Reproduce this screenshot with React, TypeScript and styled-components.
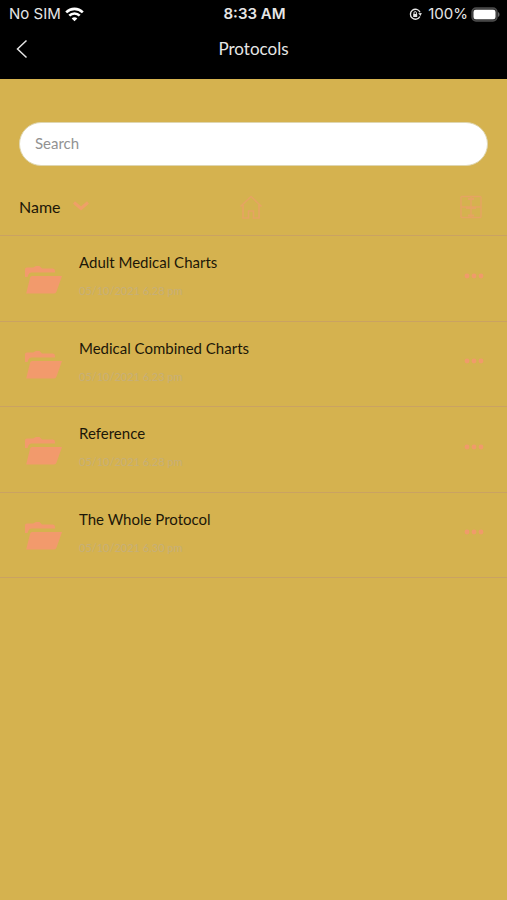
import React from "react";
import styled, { createGlobalStyle } from "styled-components";

const colors = {
  gold: "#d5b24f",
  coral: "#f29a6c",
  faint: "#e6a462",
  line: "#caa262",
  date: "#c6af78",
};

const GlobalStyle = createGlobalStyle`
  * { box-sizing: border-box; }
  body {
    margin: 0;
    background: ${colors.gold};
    font-family: Lato, "Open Sans", sans-serif;
    color: #1c1708;
  }
  button { border: 0; padding: 0; background: none; font: inherit; color: inherit; cursor: pointer; }
  svg { display: block; }
`;

const Header = styled.header`
  background: #000;
  color: #e6e6e6;
  height: 79px;
`;

const StatusBar = styled.div`
  display: grid;
  grid-template-columns: 1fr auto 1fr;
  align-items: center;
  height: 28px;
  padding: 0 7px 0 9px;
  font: 15px/20px Inter, sans-serif;
`;

const StatusGroup = styled.div<{ $end?: boolean }>`
  display: flex;
  align-items: center;
  justify-content: ${(p) => (p.$end ? "flex-end" : "flex-start")};
  gap: ${(p) => (p.$end ? 3 : 4)}px;
`;

const LockIcon = styled.svg`
  margin-right: 3px;
`;

const Clock = styled.time`
  font-weight: 600;
`;

const NavBar = styled.nav`
  display: grid;
  grid-template-columns: 44px 1fr 44px;
  align-items: center;
  height: 42px;
`;

const BackButton = styled.button`
  display: flex;
  align-items: center;
  justify-content: center;
  height: 42px;
`;

const Title = styled.h1`
  margin: 0;
  text-align: center;
  font-size: 17px;
  line-height: 24px;
  font-weight: 400;
`;

const SearchInput = styled.input`
  display: block;
  width: calc(100% - 38px);
  height: 44px;
  margin: 43px 19px 0;
  padding: 0 15px 2px;
  border: 1px solid #dfd6b0;
  border-radius: 22px;
  background: #fff;
  outline: 0;
  font: 15px Lato, sans-serif;
  color: #222;
  &::placeholder { color: #929292; opacity: 1; }
`;

const Toolbar = styled.div`
  display: grid;
  grid-template-columns: 1fr auto 1fr;
  align-items: center;
  height: 70px;
  padding: 12px 24px 0 19px;
  border-bottom: 1px solid ${colors.line};
  & > :last-child { justify-self: end; }
`;

const SortButton = styled.button`
  display: flex;
  align-items: center;
  justify-self: start;
  gap: 12px;
  font-size: 16px;
  line-height: 20px;
`;

const FileList = styled.ul`
  display: grid;
  grid-auto-rows: 1fr;
  min-height: 342px;
  margin: 0;
  padding: 0;
  list-style: none;
`;

const FileRow = styled.li`
  display: grid;
  grid-template-columns: 36px 1fr auto;
  column-gap: 18px;
  align-items: center;
  padding: 0 23px 0 25px;
  border-bottom: 1px solid ${colors.line};
`;

const FolderIcon = styled.svg`
  margin-top: 3px;
`;

const FileText = styled.div`
  display: flex;
  flex-direction: column;
  gap: 11px;
  padding-bottom: 5px;
`;

const FileName = styled.a`
  color: inherit;
  text-decoration: none;
  font-size: 15px;
  line-height: 20px;
`;

const FileDate = styled.time`
  color: ${colors.date};
  font-size: 11px;
  line-height: 16px;
`;

const MoreButton = styled.button`
  padding-bottom: 5px;
`;

const files = [
  { name: "Adult Medical Charts", date: "05/10/2021 6.28 pm" },
  { name: "Medical Combined Charts", date: "05/10/2021 6.23 pm" },
  { name: "Reference", date: "05/10/2021 6.28 pm" },
  { name: "The Whole Protocol", date: "05/10/2021 6.30 pm" },
];

const Wifi = () => (
  <svg width="19" height="15" viewBox="0 0 19 15" fill="none" stroke="#fff" strokeWidth="2.6" aria-hidden="true">
    <path d="M1.2 5.3C5.8.7 13.2.7 17.8 5.3" />
    <path d="M4.3 8.6c2.9-2.900 7.500-2.900 10.400 0" />
    <path d="M9.5 14.2 6.7 11.4c1.6-1.5 4-1.5 5.6 0Z" fill="#fff" stroke="none" />
  </svg>
);

const RotationLock = () => (
  <LockIcon width="13" height="13" viewBox="0 0 13 13" fill="none" stroke="#e6e6e6" aria-hidden="true">
    <path d="M10.9 8.5A5 5 0 1 1 11 4.2" strokeWidth="1.4" />
    <path d="m9.2 5.2 3.6-.1-1.3 3Z" fill="#e6e6e6" stroke="none" />
    <path d="M4.2 6h4v3h-4Z" fill="#e6e6e6" stroke="none" />
    <path d="M5 6V4.8a1.2 1.2 0 0 1 2.4 0V6" strokeWidth="1" />
  </LockIcon>
);

const Battery = () => (
  <svg width="29" height="15" viewBox="0 0 29 15" aria-hidden="true">
    <rect x="1" y="1" width="25" height="13" rx="4" fill="#333" stroke="#4c4c4c" strokeWidth="1.4" />
    <rect x="2.500" y="2.800" width="22" height="9.400" rx="2.300" fill="#fff" />
    <path d="M27 5c2 .8 2 4.200 0 5Z" fill="#666" />
  </svg>
);

const Folder = () => (
  <FolderIcon width="37" height="28" viewBox="0 0 37 28" fill={colors.coral} aria-hidden="true">
    <path d="M0 11V3.500C0 2.200.8 1.500 2 1.500h6L11 0h3.500l2.500 2.500h11Q30 2.500 30 5v1.500H6.500Q4.500 6.500 3.500 8.500L2.500 11Z" />
    <path d="M7 10h30l-5.500 15.500Q31 27.500 29 27.500H1.200L5 12Q5.500 10 7 10Z" />
  </FolderIcon>
);

const Home = () => (
  <svg width="24" height="26" viewBox="0 0 24 26" fill="none" stroke={colors.faint} strokeWidth="1.600" aria-hidden="true">
    <path d="m1.500 12.500 10.500-10 10.500 10M4 11v13h5.500v-7h5v7H20V11" />
  </svg>
);

const GridView = () => (
  <svg width="24" height="24" viewBox="0 0 24 24" fill="none" stroke={colors.faint} strokeWidth="1.400" aria-hidden="true">
    <rect x="2" y="1.500" width="20" height="21" rx="1" />
    <path d="M2 12h20M12 1.500v21" />
    <path d="M9 4h6M7 13h10M9 20.500h6" strokeWidth="2" />
  </svg>
);

export default function App() {
  return (
    <>
      <GlobalStyle />
      <Header>
        <StatusBar>
          <StatusGroup><span>No SIM</span><Wifi /></StatusGroup>
          <Clock>8:33 AM</Clock>
          <StatusGroup $end><RotationLock /><span>100%</span><Battery /></StatusGroup>
        </StatusBar>
        <NavBar>
          <BackButton aria-label="Back">
            <svg width="12" height="20" viewBox="0 0 12 20" fill="none" stroke="#e6e6e6" strokeWidth="1.500" aria-hidden="true">
              <path d="m10.500 1.500-9 8.500 9 8.500" />
            </svg>
          </BackButton>
          <Title>Protocols</Title>
        </NavBar>
      </Header>
      <main>
        <SearchInput type="search" placeholder="Search" aria-label="Search" />
        <Toolbar>
          <SortButton>
            Name
            <svg width="16" height="11" viewBox="0 0 16 11" fill="none" stroke="#efa067" strokeWidth="3" aria-hidden="true">
              <path d="m1 1.500 7 6 7-6" />
            </svg>
          </SortButton>
          <button aria-label="Home"><Home /></button>
          <button aria-label="Grid view"><GridView /></button>
        </Toolbar>
        <FileList>
          {files.map((file) => (
            <FileRow key={file.name}>
              <Folder />
              <FileText>
                <FileName href="#">{file.name}</FileName>
                <FileDate>{file.date}</FileDate>
              </FileText>
              <MoreButton aria-label={`More options for ${file.name}`}>
                <svg width="20" height="6" viewBox="0 0 20 6" fill="#f09b6a" aria-hidden="true">
                  <circle cx="3" cy="3" r="2.400" />
                  <circle cx="10" cy="3" r="2.400" />
                  <circle cx="17" cy="3" r="2.400" />
                </svg>
              </MoreButton>
            </FileRow>
          ))}
        </FileList>
      </main>
    </>
  );
}
